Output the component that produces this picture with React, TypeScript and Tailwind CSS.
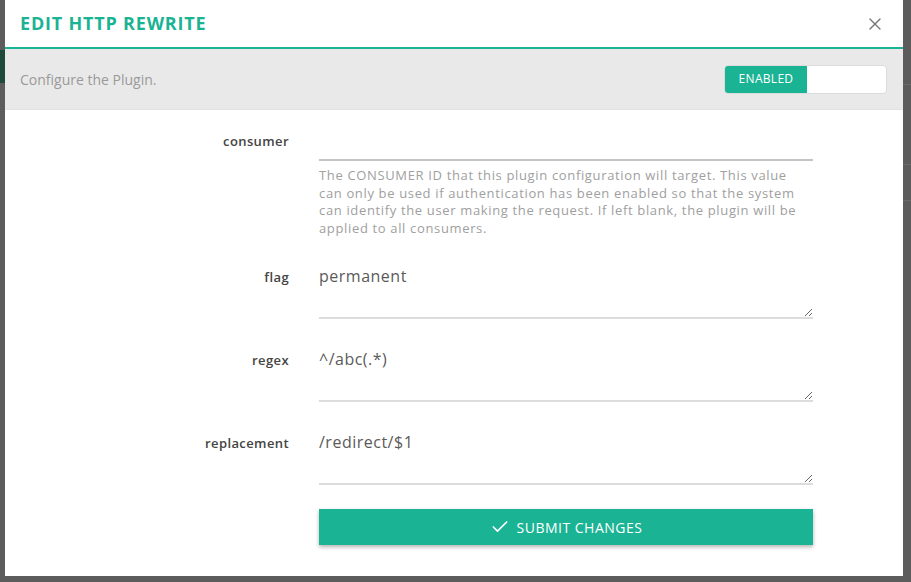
import { Check, X } from "lucide-react";

const font = { fontFamily: '"Open Sans", "Liberation Sans", sans-serif' };

function TextRow({ label, value }: { label: string; value: string }) {
  return (
    <div className="flex mb-[23px]">
      <label className="w-[284px] shrink-0 text-right pt-[8px] leading-5 text-[13px] tracking-[0.4px] font-semibold text-[#444]">
        {label}
      </label>
      <div className="ml-[30px] w-[494px]">
        <textarea
          readOnly
          rows={2}
          defaultValue={value}
          className="block w-full h-[60px] px-0 pt-[6px] text-[16px] leading-[22px] tracking-[0.5px] text-[#5a5a5a] border-0 border-b-2 border-[#dcdcdc] outline-none overflow-hidden bg-white"
          style={font}
        />
      </div>
    </div>
  );
}

export default function App() {
  return (
    <div className="w-[911px] h-[582px] bg-[#5c5c5c] relative overflow-hidden" style={font}>
      {/* page behind the overlay */}
      <div className="absolute left-0 top-[50px] w-[5px] h-[33px] bg-[#1d4a3a]" />
      <div className="absolute right-0 top-[84px] w-[8px] h-px bg-[#6a6a6a]" />
      <div className="absolute right-0 top-[164px] w-[8px] h-px bg-[#6a6a6a]" />
      <div className="absolute right-0 top-[200px] w-[8px] h-px bg-[#6a6a6a]" />

      <div className="absolute left-[5px] top-0 w-[898px] h-[576px] bg-white flex flex-col">
        <div className="h-[47px] flex items-center justify-between pl-[15px] pr-[20px]">
          <h4 className="text-[18px] font-bold text-[#1ab394] tracking-[0.8px]">EDIT HTTP REWRITE</h4>
          <X size={20} strokeWidth={1.6} className="text-[#777] mr-[-2px]" />
        </div>
        <div className="h-[2px] bg-[#1ab394]" />
        <div className="h-[61px] bg-[#e9e9e9] border-b border-[#e2e2e2] flex items-center justify-between pl-[15px] pr-[16px]">
          <span className="text-[14px] text-[#9a9a9a]">Configure the Plugin.</span>
          <div className="w-[163px] h-[29px] flex rounded-[4px] border border-[#dcdcdc] bg-white overflow-hidden">
            <div className="w-[82px] bg-[#1ab394] text-white text-[12px] tracking-[0.3px] flex items-center justify-center">
              ENABLED
            </div>
          </div>
        </div>

        <div className="pt-[17px]">
          <div className="flex mb-[22px]">
            <label className="w-[284px] shrink-0 text-right pt-[4px] leading-5 text-[13px] tracking-[0.4px] font-semibold text-[#444]">
              consumer
            </label>
            <div className="ml-[30px] w-[494px]">
              <div className="h-[34px] border-b-2 border-[#c4c4c4]" />
              <p className="mt-[6px] text-[13px] leading-[17.5px] tracking-[0.65px] text-[#a0a0a0]">
                The CONSUMER ID that this plugin configuration will target. This value can only be used if
                authentication has been enabled so that the system can identify the user making the request.
                If left blank, the plugin will be applied to all consumers.
              </p>
            </div>
          </div>

          <TextRow label="flag" value="permanent" />
          <TextRow label="regex" value="^/abc(.*)" />
          <TextRow label="replacement" value="/redirect/$1" />

          <div className="flex">
            <div className="w-[284px] shrink-0" />
            <button className="ml-[30px] mt-[1px] w-[494px] h-[36px] bg-[#1ab394] text-white text-[14px] font-medium tracking-[0.5px] flex items-center justify-center gap-[7px] shadow-[0_2px_4px_rgba(0,0,0,0.3)]">
              <Check size={20} strokeWidth={2} />
              SUBMIT CHANGES
            </button>
          </div>
        </div>
      </div>
    </div>
  );
}
